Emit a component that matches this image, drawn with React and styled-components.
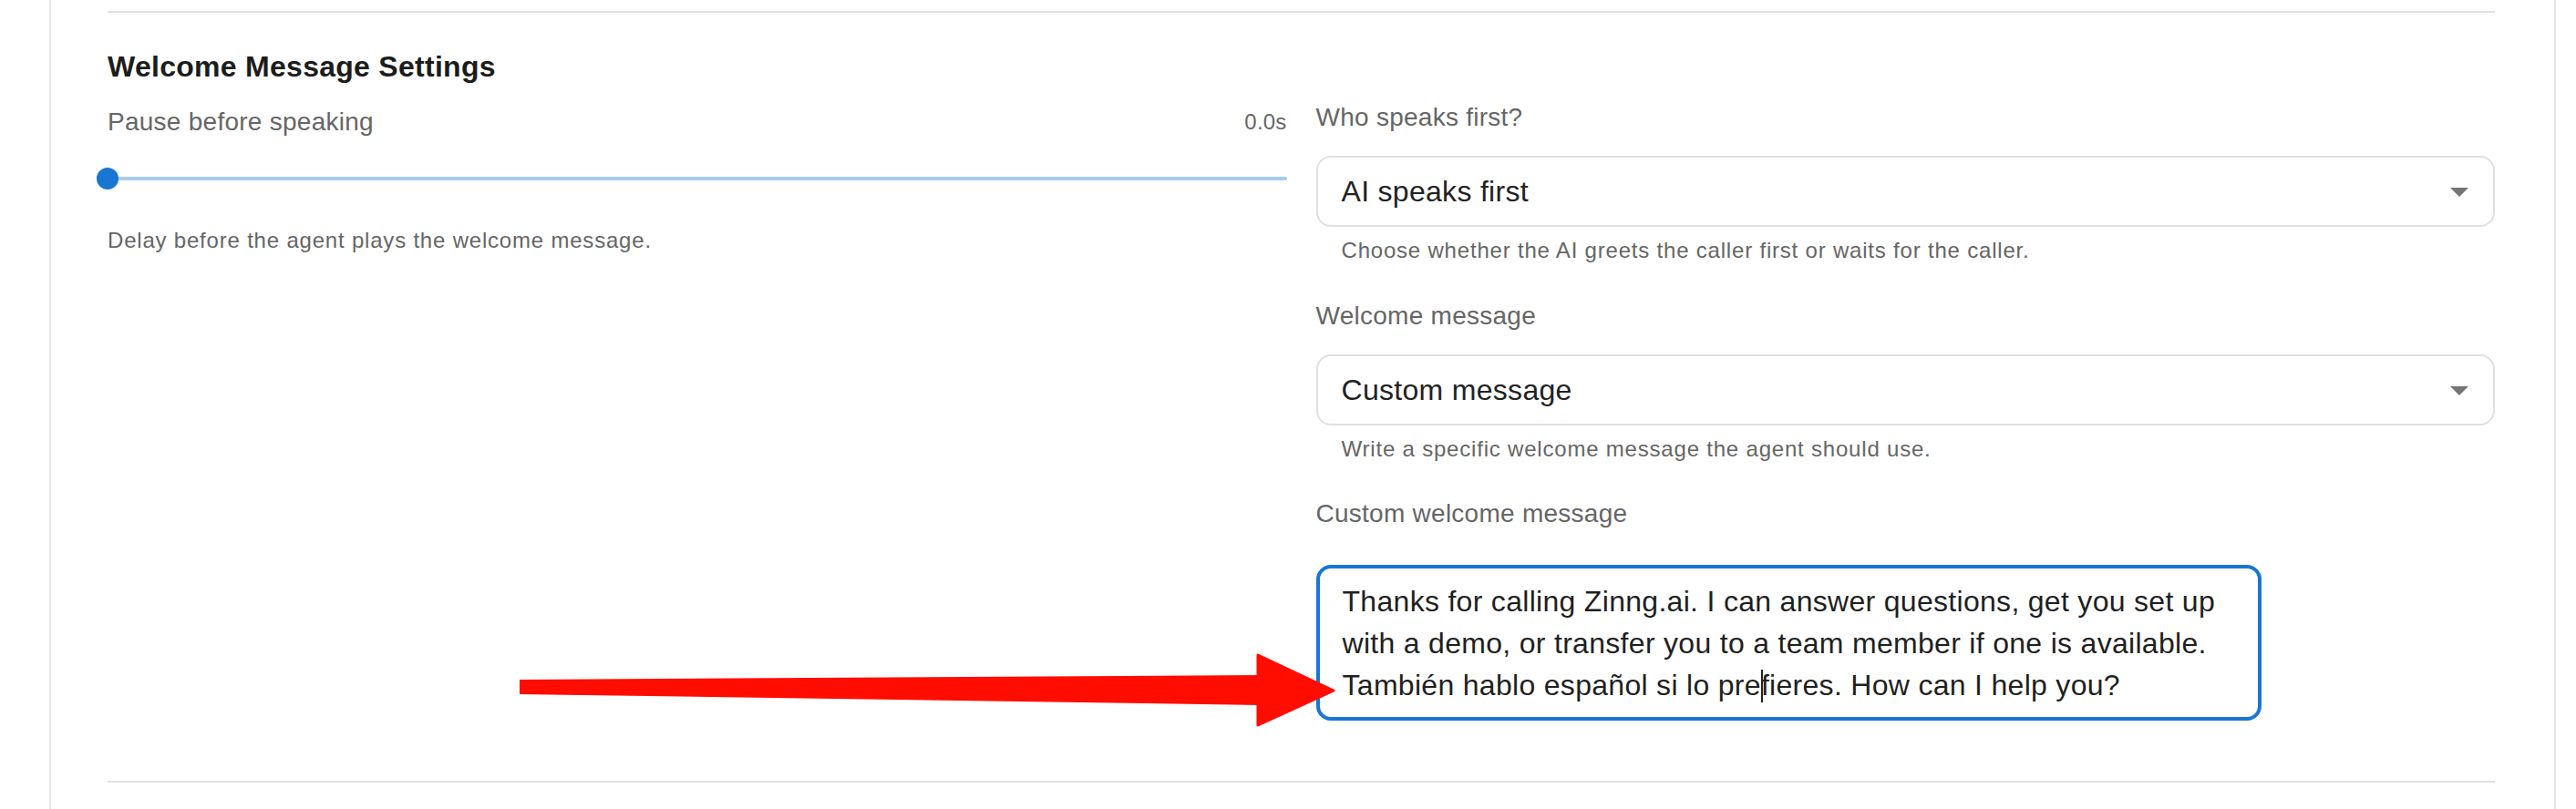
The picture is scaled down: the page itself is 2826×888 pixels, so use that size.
import React from "react";
import styled, { createGlobalStyle } from "styled-components";

const GlobalStyle = createGlobalStyle`
  html, body {
    margin: 0;
    padding: 0;
    background: #fff;
  }
  body {
    font-family: "Liberation Sans", Arial, Helvetica, sans-serif;
    color: #222;
  }
`;

const Page = styled.div`
  position: relative;
  min-height: 100vh;
`;

const Card = styled.section`
  box-sizing: border-box;
  width: 2750px;
  min-height: 100vh;
  margin-left: 54px;
  padding: 12px 65px 0 62px;
  border-left: 2px solid #e6e6e6;
  border-right: 2px solid #e6e6e6;
  background: #fff;
`;

const Divider = styled.hr`
  margin: ${({ $top }) => $top || 0}px 0 0;
  height: 2px;
  border: 0;
  background: #e0e0e0;
`;

const Heading = styled.h2`
  margin: 40px 0 0;
  font-size: 32px;
  line-height: 38px;
  font-weight: 700;
  letter-spacing: 0.28px;
  color: #1c1c1c;
`;

const Columns = styled.div`
  display: grid;
  grid-template-columns: 1fr 1fr;
  gap: 32px;
  margin-top: 17px;
`;

const Column = styled.div`
  display: flex;
  flex-direction: column;
  padding-top: ${({ $offset }) => $offset || 0}px;
`;

const Label = styled.div`
  margin-top: ${({ $top }) => $top || 0}px;
  font-size: 28px;
  line-height: 40px;
  letter-spacing: 0.26px;
  color: #666;
`;

const SliderHead = styled.div`
  display: flex;
  align-items: center;
  justify-content: space-between;
`;

const Value = styled.span`
  font-size: 24px;
  line-height: 40px;
  letter-spacing: 0.2px;
  color: #666;
`;

const SliderBox = styled.div`
  position: relative;
  display: flex;
  align-items: center;
  height: 40px;
  margin-top: 22px;
`;

const Rail = styled.div`
  width: 100%;
  height: 4px;
  border-radius: 2px;
  background: #a8cbee;
`;

const Thumb = styled.span`
  position: absolute;
  left: -12px;
  top: 8px;
  width: 24px;
  height: 24px;
  border-radius: 50%;
  background: #1976d2;
`;

const Helper = styled.div`
  margin-top: ${({ $top }) => $top || 8}px;
  padding-left: ${({ $indent }) => ($indent ? 28 : 0)}px;
  font-size: 24px;
  line-height: 36px;
  letter-spacing: 0.8px;
  color: #666;
`;

const Select = styled.div`
  box-sizing: border-box;
  display: flex;
  align-items: center;
  justify-content: space-between;
  height: 78px;
  margin-top: 22px;
  padding: 0 13px 0 26px;
  border: 2px solid #e0e0e0;
  border-radius: 16px;
  font-size: 32px;
  line-height: 38px;
  letter-spacing: 0.3px;
  color: #222;
`;

const MessageBox = styled.div`
  box-sizing: border-box;
  width: 1037px;
  margin-top: 36px;
  padding: 13px 25px 12px;
  border: 4px solid #1976d2;
  border-radius: 16px;
  font-size: 32px;
  line-height: 46px;
  letter-spacing: 0.3px;
  color: #1f1f1f;
`;

// text cursor: zero-width anchor, the bar hangs off it
const Caret = styled.span`
  position: relative;
  display: inline-block;
  width: 0;
  height: 36px;
  vertical-align: -8px;

  &::after {
    content: "";
    position: absolute;
    left: 0;
    top: 0;
    width: 2px;
    height: 36px;
    background: #222;
  }
`;

const Pointer = styled.svg`
  position: absolute;
  left: 560px;
  top: 710px;
  pointer-events: none;
`;

function DropIcon() {
  return (
    <svg width="48" height="48" viewBox="0 0 24 24" fill="#757575">
      <path d="M7 10l5 5 5-5z" />
    </svg>
  );
}

export default function App() {
  return (
    <Page>
      <GlobalStyle />
      <Card>
        <Divider />
        <Heading>Welcome Message Settings</Heading>
        <Columns>
          <Column $offset={5}>
            <SliderHead>
              <Label>Pause before speaking</Label>
              <Value>0.0s</Value>
            </SliderHead>
            <SliderBox>
              <Rail />
              <Thumb />
            </SliderBox>
            <Helper $top={30}>Delay before the agent plays the welcome message.</Helper>
          </Column>

          <Column>
            <Label>Who speaks first?</Label>
            <Select>
              <span>AI speaks first</span>
              <DropIcon />
            </Select>
            <Helper $indent>Choose whether the AI greets the caller first or waits for the caller.</Helper>

            <Label $top={34}>Welcome message</Label>
            <Select>
              <span>Custom message</span>
              <DropIcon />
            </Select>
            <Helper $indent>Write a specific welcome message the agent should use.</Helper>

            <Label $top={33}>Custom welcome message</Label>
            <MessageBox role="textbox">
              Thanks for calling Zinng.ai. I can answer questions, get you set up with a demo, or
              transfer you to a team member if one is available. También hablo español si lo pre
              <Caret />
              fieres. How can I help you?
            </MessageBox>
          </Column>
        </Columns>
        <Divider $top={66} />
      </Card>

      <Pointer width="910" height="95" viewBox="0 0 910 95">
        <polygon points="10,36 824,31 824,64 10,52" fill="#ff0d00" />
        <polygon
          points="820,9 903,48 820,86"
          fill="#ff0d00"
          stroke="#ff0d00"
          strokeWidth="3"
          strokeLinejoin="round"
        />
      </Pointer>
    </Page>
  );
}
